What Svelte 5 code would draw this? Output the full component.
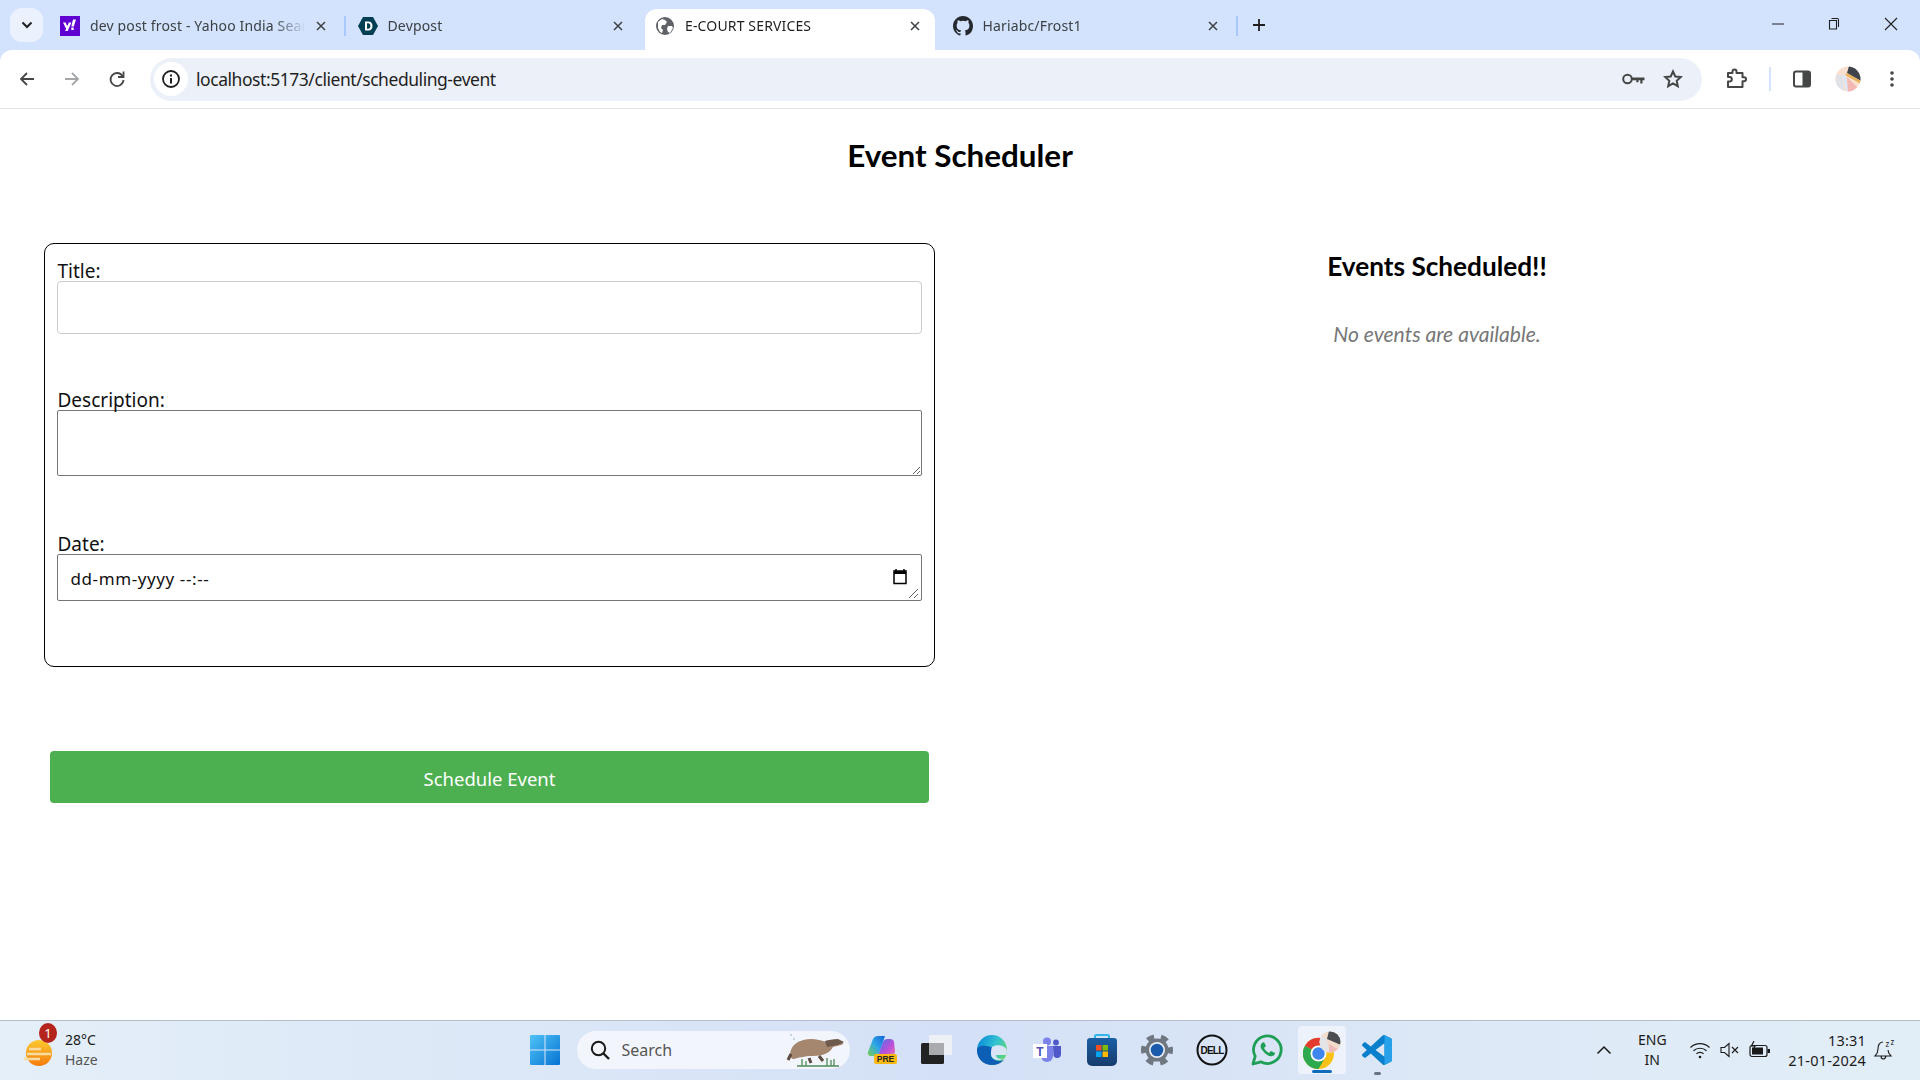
<script>
	const tabs = [
		{ title: 'dev post frost - Yahoo India Search', icon: 'yahoo', sep: true },
		{ title: 'Devpost', icon: 'devpost' },
		{ title: 'E-COURT SERVICES', icon: 'globe', active: true },
		{ title: 'Hariabc/Frost1', icon: 'github', sep: true }
	];
</script>

<div class="screen">
	<header class="tabstrip">
		<button class="tab-search" aria-label="Search tabs">
			<svg width="14" height="14" viewBox="0 0 14 14"><path d="M2.500 4.500 7 9l4.500-4.500" fill="none" stroke="#1f1f1f" stroke-width="2" /></svg>
		</button>
		<div class="tabs">
			{#each tabs as tab}
				<div class="tab" class:active={tab.active} class:sep={tab.sep}>
					{#if tab.icon === 'yahoo'}
						<svg class="favicon" viewBox="0 0 20 20"><rect width="20" height="20" fill="#5f01d1" /><path d="M3 6.500h2.700l1.500 3.800 1.600-3.800h2.600l-3.700 8.500H5.100l1-2.300zM13 3.500h3L13.800 10.500h-2.500zM11.300 11.500h2.400v2.400h-2.400z" fill="#fff" /></svg>
					{:else if tab.icon === 'devpost'}
						<svg class="favicon" viewBox="0 0 20 20"><path d="M5 1h10l5 9-5 9H5l-5-9z" fill="#003e54" /><path d="M7 5.500h3.200c3 0 4.300 2 4.300 4.500s-1.300 4.500-4.300 4.500H7zm2 1.800v5.400h1.100c1.600 0 2.300-1.100 2.300-2.700s-.7-2.700-2.300-2.700z" fill="#fff" /></svg>
					{:else if tab.icon === 'globe'}
						<svg class="favicon" viewBox="0 0 20 20"><circle cx="10" cy="10" r="9" fill="#5f6368" /><path d="M3 6l4-3 3 1 2 2-2 3-3 0-1 3 2 2-1 3-2-1-2-4zM13 10l4 0 1 2-3 5-2-1-1-3z" fill="#fff" /></svg>
					{:else}
						<svg class="favicon" viewBox="0 0 16 16"><path d="M8 0C3.580 0 0 3.580 0 8c0 3.540 2.290 6.530 5.470 7.590.4.070.55-.17.55-.38v-1.340c-2.230.48-2.700-1.070-2.700-1.070-.36-.92-.89-1.170-.89-1.170-.73-.5.050-.49.050-.49.800.060 1.230.830 1.230.830.710 1.220 1.870.870 2.330.660.070-.520.280-.870.510-1.070-1.780-.2-3.640-.890-3.640-3.950 0-.870.310-1.590.820-2.150-.080-.2-.360-1.020.080-2.120 0 0 .670-.210 2.200.820a7.600 7.600 0 0 1 4 0c1.530-1.040 2.200-.820 2.200-.820.440 1.100.160 1.920.080 2.120.510.560.820 1.270.820 2.150 0 3.070-1.870 3.750-3.650 3.950.290.250.540.730.540 1.480v2.200c0 .210.150.460.550.380A8 8 0 0 0 16 8c0-4.420-3.580-8-8-8z" fill="#24292f" /></svg>
					{/if}
					<span class="tab-title">{tab.title}</span>
					<svg class="tab-close" width="10" height="10" viewBox="0 0 10 10"><path d="M1 1l8 8M9 1l-8 8" stroke="#3c4043" stroke-width="1.500" /></svg>
				</div>
			{/each}
		</div>
		<svg class="new-tab" width="14" height="14" viewBox="0 0 14 14"><path d="M7 1v12M1 7h12" stroke="#1f1f1f" stroke-width="1.800" /></svg>
		<div class="window-controls">
			<svg width="12" height="12" viewBox="0 0 12 12"><path d="M0 6h12" stroke="#1f1f1f" stroke-width="1" /></svg>
			<svg width="14" height="14" viewBox="0 0 14 14"><path d="M4.500 1.500h6a1.500 1.500 0 0 1 1 1.500v7M2.500 3.500h7v8.500h-7z" fill="none" stroke="#1f1f1f" stroke-width="1.100" /></svg>
			<svg width="14" height="14" viewBox="0 0 14 14"><path d="M1 1l12 12M13 1 1 13" stroke="#1f1f1f" stroke-width="1.100" /></svg>
		</div>
	</header>

	<nav class="toolbar">
		<svg class="nav-icon first" viewBox="0 0 18 18"><path d="M16 9H3M9 3 3 9l6 6" fill="none" stroke="#444746" stroke-width="1.800" /></svg>
		<svg class="nav-icon" viewBox="0 0 18 18"><path d="M2 9h13M9 3l6 6-6 6" fill="none" stroke="#a4a7aa" stroke-width="1.800" /></svg>
		<svg class="nav-icon" viewBox="0 0 18 18"><path d="M14.500 6a6.500 6.500 0 1 0 1 4" fill="none" stroke="#444746" stroke-width="1.800" /><path d="M15.500 1.500V7h-5.500" fill="none" stroke="#444746" stroke-width="1.800" /></svg>
		<div class="omnibox">
			<span class="site-info">
				<svg width="20" height="20" viewBox="0 0 20 20"><circle cx="10" cy="10" r="8" fill="none" stroke="#1f1f1f" stroke-width="1.800" /><path d="M10 9v5.500M10 5.500v2" stroke="#1f1f1f" stroke-width="2" /></svg>
			</span>
			<span class="url">localhost:5173/client/scheduling-event</span>
			<svg class="key" width="23" height="14" viewBox="0 0 23 14"><circle cx="5.500" cy="7" r="4.300" fill="none" stroke="#444746" stroke-width="2" /><path d="M9.500 5.500H22.500V8.300h-2v3.200h-2.200V8.300h-1.800v2h-2.200v-2h-4.800z" fill="#444746" /></svg>
			<svg class="star" width="20" height="20" viewBox="0 0 20 20"><path d="m10 2.500 2.300 5 5.400.6-4 3.700 1.100 5.400L10 14.500l-4.800 2.700 1.100-5.400-4-3.700 5.400-.6z" fill="none" stroke="#444746" stroke-width="2" /></svg>
		</div>
		<svg class="ext" width="22" height="22" viewBox="0 0 22 22"><path d="M3 5h4.500V3.600a2 2 0 0 1 4 0V5H17.500v4.300H19a2 2 0 0 1 0 4h-1.500V19H3v-5.500h1.600a2.200 2.200 0 0 0 0-4.400H3z" fill="none" stroke="#444746" stroke-width="2" stroke-linejoin="round" /></svg>
		<span class="tool-sep"></span>
		<svg class="panel" width="18" height="18" viewBox="0 0 18 18"><rect x="1" y="1.500" width="16" height="15" fill="none" stroke="#444746" stroke-width="2" rx="2" /><rect x="9.500" y="2" width="7" height="14" fill="#444746" /></svg>
		<svg class="avatar" width="26" height="26" viewBox="0 0 26 26"><clipPath id="av"><circle cx="13" cy="13" r="12.500" /></clipPath><g clip-path="url(#av)"><rect width="26" height="26" fill="#fbe0d0" /><path d="M14 0h12v15L12 7z" fill="#3f434b" /><path d="M12 7l14 8v3L10 9z" fill="#e8b25a" /><path d="M0 9h7l3 17H0z" fill="#dfe2e6" /><path d="M7 9l5 17h3L10 9z" fill="#dbe6fa" /><path d="M12 11l10 10-4 5h-5z" fill="#f4b8b4" /></g></svg>
		<svg class="menu" width="4" height="18" viewBox="0 0 4 18"><circle cx="2" cy="3" r="1.800" fill="#444746" /><circle cx="2" cy="9" r="1.800" fill="#444746" /><circle cx="2" cy="15" r="1.800" fill="#444746" /></svg>
	</nav>

	<main class="page">
		<h1>Event Scheduler</h1>
		<div class="columns">
			<section class="form-col">
				<form class="event-form">
					<div class="field">
						<label for="title">Title:</label>
						<input id="title" class="title-input" type="text" />
					</div>
					<div class="field">
						<label for="description">Description:</label>
						<textarea id="description"></textarea>
					</div>
					<div class="field date-field">
						<label for="date">Date:</label>
						<div class="date-box">
							<input id="date" type="text" value="dd-mm-yyyy --:--" />
							<svg class="calendar" width="14" height="16" viewBox="0 0 14 16"><path d="M3 0v2M11 0v2" stroke="#000" stroke-width="1.500" /><rect x="1" y="2" width="12" height="12.500" fill="none" stroke="#000" stroke-width="1.500" /><rect x="1" y="2" width="12" height="3" /></svg>
							<svg class="grip" width="11" height="11" viewBox="0 0 11 11"><path d="M1 10 10 1M6 10l4-4" stroke="#666" stroke-width="1" /></svg>
						</div>
					</div>
				</form>
				<button class="submit" type="button">Schedule Event</button>
			</section>
			<aside class="events-col">
				<h2>Events Scheduled!!</h2>
				<p>No events are available.</p>
			</aside>
		</div>
	</main>

	<footer class="taskbar">
		<div class="weather">
			<div class="weather-icon">
				<svg width="30" height="34" viewBox="0 0 30 34"><defs><linearGradient id="sun" x1="0" y1="0" x2="0" y2="1"><stop offset="0" stop-color="#fdc82f" /><stop offset="1" stop-color="#f57c0c" /></linearGradient></defs><circle cx="16" cy="17" r="13" fill="url(#sun)" /><path d="M1 23h16M4 18h24M6 13h12" stroke="#f6dca0" stroke-width="2.500" /></svg>
				<span class="badge">1</span>
			</div>
			<div class="weather-text">
				<span>28°C</span>
				<span class="muted">Haze</span>
			</div>
		</div>
		<div class="task-center">
			<svg class="win" width="30" height="30" viewBox="0 0 30 30"><defs><linearGradient id="winb" x1="0" y1="0" x2="1" y2="1"><stop offset="0" stop-color="#4fc3f7" /><stop offset="1" stop-color="#0673d3" /></linearGradient></defs><path d="M0 1a1 1 0 0 1 1-1h13.500v14.500H0zM15.500 0H29a1 1 0 0 1 1 1v13.500H15.500zM0 15.500h14.500V30H1a1 1 0 0 1-1-1zM15.500 15.500H30V29a1 1 0 0 1-1 1H15.500z" fill="url(#winb)" /></svg>
			<div class="search">
				<svg width="22" height="22" viewBox="0 0 22 22"><circle cx="9.500" cy="9.500" r="6.700" fill="none" stroke="#1a1a1a" stroke-width="2" /><path d="m14.500 14.500 5.500 5.500" stroke="#1a1a1a" stroke-width="2.400" /></svg>
				<span>Search</span>
				<svg class="platypus" width="60" height="36" viewBox="0 0 60 36"><path d="M6 18c3-9 16-13 28-10 6 1 9 4 14 2l9-1c2 1 1 4-1 4l-8 2c-3 6-10 9-20 9-9 0-15 2-19 3-3 1-5-5-3-9z" fill="#a5866f" /><path d="M40 9c3-1 8-2 13-2l6 3-6 3-11 2z" fill="#6e5a4d" /><path d="M6 22l-3 6M24 26l2 5M34 24l4 5" stroke="#5b4a40" stroke-width="3" /><path d="M12 34h42M17 34v-7M21 34v-5M42 34v-8M46 34v-6M49 34v-7" stroke="#4f8b55" stroke-width="1.300" /><circle cx="6" cy="3" r=".8" fill="#8ab" /><circle cx="9" cy="7" r=".8" fill="#8ab" /></svg>
			</div>
			<div class="apps">
				<span class="app">
					<svg width="30" height="30" viewBox="0 0 30 30"><defs><linearGradient id="copa" x1="0" y1="1" x2="1" y2="0"><stop offset="0" stop-color="#7bd04f" /><stop offset=".5" stop-color="#2ea6e8" /><stop offset="1" stop-color="#1565d8" /></linearGradient><linearGradient id="copb" x1="0" y1="0" x2="1" y2="1"><stop offset="0" stop-color="#4b6fe8" /><stop offset=".6" stop-color="#c04fd8" /><stop offset="1" stop-color="#e878b8" /></linearGradient></defs><path d="M1 17 6 4c1-2 3-3 5-3h7l-5 15c-1 3-3 5-6 5H4c-2 0-4-2-3-4z" fill="url(#copa)" /><path d="M16 7c1-2 2-3 5-3h2c2 0 4 1 4 3l1 9c0 3-2 5-5 5h-8c-2 0-3-2-3-3z" fill="url(#copb)" /><rect x="7" y="19" width="23" height="10" rx="2" fill="#fdb913" /><text x="18.500" y="27" class="pre">PRE</text></svg>
				</span>
				<span class="app">
					<svg width="32" height="30" viewBox="0 0 32 30"><rect x="0" y="8" width="23" height="21" rx="1.500" fill="#222" /><rect x="8" y="0" width="23" height="20" rx="1" fill="#eef0f4" fill-opacity="0.950" /><rect x="8" y="8" width="15" height="12" fill="#a9abae" /></svg>
				</span>
				<span class="app">
					<svg width="30" height="30" viewBox="0 0 30 30"><defs><linearGradient id="edge" x1="0" y1="0.300" x2="1" y2="0.700"><stop offset="0" stop-color="#0c8ed9" /><stop offset=".55" stop-color="#35c4d0" /><stop offset="1" stop-color="#63d668" /></linearGradient></defs><circle cx="15" cy="15" r="15" fill="url(#edge)" /><path d="M0 15C0 24 7 30 15 30c5 0 9-2 12-5-5 2-13 1-13-6 0-3 2-4 4-5-5-4-18-5-18 1z" fill="#0c5fb5" /><path d="M14 19c0 4 4 6 8 6 2 0 3.500-1 5-1.500-4 1-8 0-8-3.500h10c1-2 1-4 .5-6C27 10 19 9 15 12c-1 2-1 5-1 7z" fill="#d9e4f6" /></svg>
				</span>
				<span class="app">
					<svg width="28" height="26" viewBox="0 0 28 26"><circle cx="14" cy="4.500" r="4" fill="#7b83eb" /><circle cx="23" cy="5.500" r="2.900" fill="#5059c9" /><path d="M8 9h12v10a6 6 0 0 1-12 0z" fill="#7b83eb" /><path d="M20 9h8v8a4 4 0 0 1-7.500 2z" fill="#5059c9" /><rect x="0" y="7" width="14" height="14" fill="#fff" /><text x="7" y="18.500" class="teams">T</text></svg>
				</span>
				<span class="app">
					<svg width="30" height="32" viewBox="0 0 30 32"><defs><linearGradient id="store" x1="0" y1="0" x2="0" y2="1"><stop offset="0" stop-color="#1a5fa5" /><stop offset="1" stop-color="#173b6c" /></linearGradient></defs><path d="M8 5V2.500A1.500 1.500 0 0 1 9.500 1h11A1.500 1.500 0 0 1 22 2.500V5" fill="none" stroke="#30b6e8" stroke-width="2" /><path d="M0 7a3 3 0 0 1 3-3h24a3 3 0 0 1 3 3v20a5 5 0 0 1-5 5H5a5 5 0 0 1-5-5z" fill="url(#store)" /><rect x="9" y="11" width="5.500" height="5.500" fill="#f25022" /><rect x="15.500" y="11" width="5.500" height="5.500" fill="#7fba00" /><rect x="9" y="17.500" width="5.500" height="5.500" fill="#00a4ef" /><rect x="15.500" y="17.500" width="5.500" height="5.500" fill="#ffb900" /></svg>
				</span>
				<span class="app">
					<svg width="32" height="32" viewBox="0 0 32 32"><circle cx="16" cy="16" r="11.500" fill="#6f7781" /><circle cx="16" cy="16" r="13.500" fill="none" stroke="#6f7781" stroke-width="5" stroke-dasharray="7.140 7" stroke-dashoffset="3.500" /><circle cx="16" cy="16" r="8" fill="#e8edf7" /><circle cx="16" cy="16" r="6.300" fill="#1a5cab" /></svg>
				</span>
				<span class="app">
					<svg width="32" height="32" viewBox="0 0 32 32"><circle cx="16" cy="16" r="14.500" fill="none" stroke="#111" stroke-width="2" /><text x="16" y="20" class="dell">DELL</text></svg>
				</span>
				<span class="app">
					<svg width="32" height="32" viewBox="0 0 32 32"><path d="M2 30l2.200-7.800A13.800 13.800 0 1 1 9.800 27.800z" fill="none" stroke="#1f9e56" stroke-width="2.800" stroke-linejoin="round" /><path d="M11 9c-2 2-2 5 1 8 3 4 7 6 9 5 2 0 3-2 3-3l-4-2-2 2c-2-1-4-3-5-5l2-2-2-4z" fill="#1f9e56" /></svg>
				</span>
				<span class="app running">
					<svg width="38" height="38" viewBox="0 0 38 38"><g transform="translate(0 7)"><circle cx="15.500" cy="15.500" r="15.500" fill="#fbc116" /><path d="M2 7.700A15.500 15.500 0 0 1 29 7.700H15.500A7.800 7.800 0 0 0 8.800 11.600z" fill="#e33b2e" /><path d="M2 7.700A15.500 15.500 0 0 0 15.500 31l6.800-11.700a7.800 7.800 0 0 1-13.500-7.700z" fill="#2da94f" /><circle cx="15.500" cy="15.500" r="8" fill="#fff" /><circle cx="15.500" cy="15.500" r="6.200" fill="#3f86ee" /></g><clipPath id="avt"><circle cx="27" cy="11" r="10.500" /></clipPath><g clip-path="url(#avt)"><rect x="16" width="22" height="22" fill="#f3dccb" /><path d="M26 0h12v14L24 8z" fill="#4a4d52" /><path d="M16 6h7l4 16H16z" fill="#e2e4e7" /><path d="M26 13l10 6-6 3h-4z" fill="#f0bcb8" /></g></svg>
				</span>
				<span class="app open">
					<svg width="30" height="30" viewBox="0 0 100 100"><path d="M96.460 10.800 75.860.870c-2.380-1.150-5.230-.660-7.100 1.210L29.400 38.050 12.250 25.030c-1.600-1.210-3.830-1.110-5.310.240L1.440 30.270c-1.810 1.640-1.810 4.490 0 6.130L16.320 50 1.440 63.600c-1.810 1.640-1.810 4.490 0 6.130l5.500 5c1.480 1.350 3.710 1.450 5.310.240L29.400 61.950l39.360 35.970c1.870 1.870 4.720 2.360 7.100 1.210l20.600-9.930c2.160-1.040 3.540-3.230 3.540-5.630V16.430c0-2.400-1.380-4.590-3.540-5.630zM75 72.700 45.100 50 75 27.300z" fill="#0a7fcb" /><path d="M75 .6c.3.100.6.150.86.270l20.600 9.930c2.160 1.040 3.540 3.230 3.540 5.630v67.140c0 2.400-1.380 4.590-3.540 5.630l-20.600 9.930c-.3.100-.6.200-.86.270z" fill="#27a2ea" /></svg>
				</span>
			</div>
		</div>
		<div class="tray">
			<svg width="16" height="10" viewBox="0 0 16 10"><path d="m1.500 8.500 6.500-6.500 6.500 6.500" fill="none" stroke="#1a1a1a" stroke-width="1.500" /></svg>
			<div class="lang"><span>ENG</span><span>IN</span></div>
			<div class="tray-icons">
				<svg width="22" height="18" viewBox="0 0 22 18"><path d="M1.500 6.500a13.500 13.500 0 0 1 19 0M4.500 9.800a9.500 9.500 0 0 1 13 0M7.500 12.800a5 5 0 0 1 7 0" fill="none" stroke="#1a1a1a" stroke-width="1.200" /><circle cx="11" cy="16" r="1.300" fill="#1a1a1a" /></svg>
				<svg width="20" height="16" viewBox="0 0 20 16"><path d="M1 5.500h3.500L9 1.500v13l-4.500-4H1z" fill="none" stroke="#1a1a1a" stroke-width="1.100" /><path d="m12 5 6 6M18 5l-6 6" stroke="#1a1a1a" stroke-width="1.100" /></svg>
				<svg width="22" height="18" viewBox="0 0 22 18"><rect x="1" y="4.500" width="17" height="11" rx="2" fill="none" stroke="#1a1a1a" stroke-width="1.200" /><rect x="3" y="6.500" width="11" height="7" fill="#1a1a1a" /><rect x="18.500" y="8" width="2.500" height="4" fill="#1a1a1a" /><path d="M5 0 2.500 5H6L4 9" fill="none" stroke="#1a1a1a" stroke-width="1.200" /></svg>
			</div>
			<div class="clock"><span>13:31</span><span>21-01-2024</span></div>
			<svg class="bell" width="24" height="32" viewBox="0 -4 24 32"><path d="M9 4C5 4 4 8 4 11c0 3-1 5-3 7h16c-2-2-3-4-3-6M7 18c0 4 4 4 5 0" fill="none" stroke="#1a1a1a" stroke-width="1.100" /><text x="11.500" y="9" class="zz">z</text><text x="16.500" y="6.500" class="zz">z</text></svg>
		</div>
	</footer>
</div>

<style>
	:global(body) {
		margin: 0;
		background: #fff;
	}
	svg {
		display: block;
		flex: none;
	}
	.screen {
		width: 1920px;
		height: 1080px;
		display: flex;
		flex-direction: column;
		overflow: hidden;
		background: #d3e3fd;
		font-family: 'Noto Sans', sans-serif;
	}

	/* browser chrome */
	.tabstrip {
		height: 50px;
		flex: none;
		display: flex;
		align-items: flex-end;
	}
	.tab-search {
		width: 33px;
		height: 34px;
		margin: 0 5px 8px 10px;
		padding: 0;
		border: none;
		border-radius: 12px;
		background: #ecf2fd;
		display: flex;
		align-items: center;
		justify-content: center;
	}
	.tabs {
		display: flex;
	}
	.tab {
		width: 297.5px;
		box-sizing: border-box;
		height: 41px;
		padding: 0 12px 8px;
		display: flex;
		align-items: center;
		gap: 10px;
		font-size: 14px;
		letter-spacing: 0.15px;
		color: #3c4043;
		position: relative;
	}
	.tab.sep::after {
		content: '';
		position: absolute;
		right: 0;
		top: 7px;
		width: 2px;
		height: 20px;
		background: #a8c7fa;
	}
	.tab.active {
		width: 290px;
		margin: 0 5.5px 0 2px;
		padding-left: 10px;
		background: #fff;
		border-radius: 12px 12px 0 0;
		color: #1f1f1f;
	}
	.favicon {
		width: 20px;
		height: 20px;
	}
	.tab-title {
		flex: 1;
		white-space: nowrap;
		overflow: hidden;
		-webkit-mask-image: linear-gradient(to right, #000 85%, transparent);
		mask-image: linear-gradient(to right, #000 85%, transparent);
	}
	.tab-close {
		margin-right: 8px;
	}
	.tab.active .tab-close {
		margin-right: 3px;
	}
	.new-tab {
		margin: 0 0 18px 14px;
	}
	.window-controls {
		margin-left: auto;
		margin-right: 22px;
		margin-bottom: 19px;
		display: flex;
		align-items: center;
		gap: 43px;
	}
	.toolbar {
		height: 59px;
		flex: none;
		box-sizing: border-box;
		border-bottom: 1px solid #e2e3e6;
		border-radius: 12px 12px 0 0;
		display: flex;
		align-items: center;
		padding: 0 14px 0 0;
		background: #fff;
	}
	.nav-icon {
		width: 18px;
		height: 18px;
		margin-right: 27px;
	}
	.nav-icon.first {
		margin-left: 18px;
	}
	.omnibox {
		width: 1552px;
		height: 43px;
		margin-left: -3px;
		box-sizing: border-box;
		background: #ecf0f8;
		border-radius: 22px;
		display: flex;
		align-items: center;
		padding: 0 19px 0 4px;
	}
	.site-info {
		width: 34px;
		height: 34px;
		border-radius: 50%;
		background: #fff;
		display: flex;
		align-items: center;
		justify-content: center;
	}
	.url {
		flex: 1;
		margin-left: 8px;
		font-size: 17.5px;
		letter-spacing: -0.45px;
		color: #1f1f1f;
	}
	.key {
		margin-right: 18px;
	}
	.ext {
		margin-left: 23px;
	}
	.tool-sep {
		width: 2px;
		height: 24px;
		background: #d3e3fd;
		margin: 0 22px;
	}
	.avatar {
		margin-left: 24px;
	}
	.menu {
		margin-left: 29px;
	}

	/* page */
	.page {
		flex: 1;
		min-height: 0;
		background: #fff;
	}
	h1 {
		margin: 0;
		padding-top: 27px;
		text-align: center;
		font-family: Lato, sans-serif;
		font-size: 31.4px;
		line-height: 38px;
		font-weight: 700;
		color: #000;
	}
	.columns {
		display: grid;
		grid-template-columns: 960px 960px;
		margin-top: 69px;
	}
	.form-col {
		padding: 0 25px 0 44px;
	}
	.event-form {
		height: 424px;
		box-sizing: border-box;
		border: 1.5px solid #000;
		border-radius: 10px;
		padding: 16px 12.5px 0 11.5px;
		display: flex;
		flex-direction: column;
		gap: 55px;
	}
	.date-field {
		margin-top: 2px;
	}
	label {
		display: block;
		margin-bottom: -1px;
		padding-left: 1px;
		font-size: 19px;
		line-height: 22px;
		color: #111;
	}
	input,
	textarea {
		display: block;
		width: 100%;
		box-sizing: border-box;
		margin: 0;
		outline: none;
		background: #fff;
		font: inherit;
	}
	.title-input {
		height: 53px;
		border: 1px solid #ccc;
		border-radius: 4px;
	}
	textarea {
		height: 66px;
		border: 1px solid #767676;
		border-radius: 2px;
		resize: vertical;
	}
	.date-box {
		position: relative;
	}
	.date-box input {
		height: 47px;
		border: 1px solid #767676;
		border-radius: 2px;
		padding: 2px 13px 0;
		font-size: 17px;
		letter-spacing: 0.6px;
		color: #111;
	}
	.calendar {
		position: absolute;
		right: 15px;
		top: 15px;
	}
	.grip {
		position: absolute;
		right: 3px;
		bottom: 2px;
	}
	.submit {
		display: block;
		width: 879px;
		height: 52px;
		margin: 84px 0 0 6px;
		padding: 2px 0 0;
		border: none;
		border-radius: 4px;
		background: #4caf50;
		color: #fff;
		font: inherit;
		font-size: 18.5px;
	}
	.events-col {
		text-align: center;
		padding-top: 8px;
		margin-left: 17px;
		width: 920px;
	}
	h2 {
		margin: 0;
		font-family: Lato, sans-serif;
		font-size: 26.2px;
		line-height: 30px;
		font-weight: 700;
		color: #000;
	}
	.events-col p {
		margin: 41px 0 0;
		font-family: Lato, sans-serif;
		font-style: italic;
		font-size: 21.1px;
		line-height: 24px;
		color: #777;
	}

	/* taskbar */
	.taskbar {
		height: 60px;
		flex: none;
		box-sizing: border-box;
		border-top: 1px solid #b5bfcc;
		padding-bottom: 2px;
		background: linear-gradient(to right, #e4eff9, #dbe6f7 30%, #d4e0f6 50%, #dce8f6 75%, #e2eef7);
		display: flex;
		align-items: center;
		font-size: 14px;
		color: #1a1a1a;
	}
	.weather {
		width: 529.5px;
		flex: none;
		display: flex;
		align-items: center;
		padding-left: 23px;
		box-sizing: border-box;
	}
	.weather-icon {
		position: relative;
		width: 42px;
		margin-top: 6px;
	}
	.badge {
		position: absolute;
		left: 16px;
		top: -13px;
		width: 18px;
		height: 20px;
		border-radius: 50%;
		background: #b4231c;
		color: #fff;
		font-size: 13px;
		line-height: 20px;
		text-align: center;
	}
	.weather-text {
		display: flex;
		flex-direction: column;
		line-height: 20px;
		font-size: 14px;
	}
	.muted {
		color: #555;
	}
	.task-center {
		display: flex;
		align-items: center;
	}
	.search {
		width: 273px;
		height: 38px;
		margin-left: 17px;
		box-sizing: border-box;
		padding: 0 5px 0 12px;
		background: #f2f6fc;
		border-radius: 19px;
		display: flex;
		align-items: center;
		gap: 11px;
		color: #555;
		font-size: 16px;
	}
	.platypus {
		margin-left: auto;
	}
	.apps {
		display: flex;
		margin-left: 5px;
	}
	.app {
		width: 55px;
		height: 48px;
		display: flex;
		align-items: center;
		justify-content: center;
		position: relative;
		border-radius: 4px;
	}
	.app.running {
		width: 48px;
		margin: 0 3.5px;
		background: #eef3fb;
	}
	.app.running::after {
		content: '';
		position: absolute;
		left: 14px;
		bottom: 1px;
		width: 20px;
		height: 3px;
		border-radius: 2px;
		background: #0f6cbd;
	}
	.app.open::after {
		content: '';
		position: absolute;
		left: 24px;
		bottom: -1px;
		width: 7px;
		height: 3px;
		border-radius: 2px;
		background: #6b7280;
	}
	.pre {
		font: 700 8.5px 'Liberation Sans', sans-serif;
		text-anchor: middle;
		fill: #222;
	}
	.teams {
		font: 700 12px 'Liberation Sans', sans-serif;
		text-anchor: middle;
		fill: #4b53bc;
	}
	.dell {
		font: 700 10px 'Liberation Sans', sans-serif;
		text-anchor: middle;
		fill: #111;
		letter-spacing: -0.8px;
	}
	.zz {
		font: 8px 'Noto Sans', sans-serif;
		fill: #1a1a1a;
	}
	.tray {
		margin-left: auto;
		margin-right: 22px;
		display: flex;
		align-items: center;
	}
	.lang {
		margin-left: 23px;
		width: 34px;
		display: flex;
		flex-direction: column;
		align-items: center;
		line-height: 20px;
	}
	.tray-icons {
		margin-left: 20px;
		display: flex;
		align-items: center;
		gap: 9px;
	}
	.clock {
		margin-left: 17px;
		display: flex;
		flex-direction: column;
		align-items: flex-end;
		line-height: 20px;
		font-size: 14.5px;
		letter-spacing: 0.2px;
	}
	.bell {
		margin-left: 8px;
	}
</style>
